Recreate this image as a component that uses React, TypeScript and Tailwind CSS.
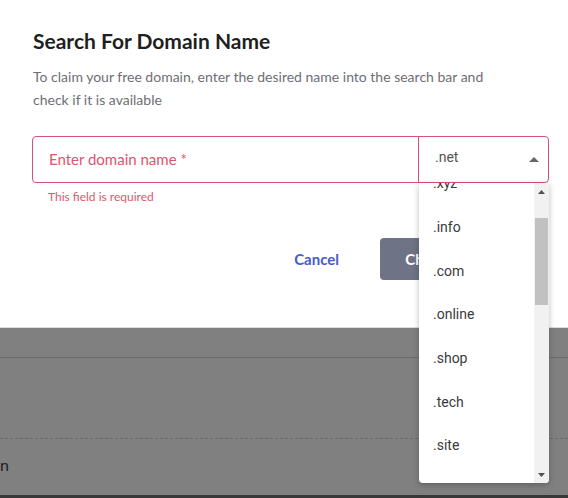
import { useState } from 'react';

const tlds = ['.xyz', '.info', '.com', '.online', '.shop', '.tech', '.site'];

function Scrollbar() {
  return (
    <div className="w-[15px] h-full bg-[#f1f1f1] flex flex-col items-center">
      <div className="h-[17px] w-full flex items-center justify-center">
        <svg width="7" height="4" viewBox="0 0 7 4">
          <path d="M0 4 L3.5 0 L7 4 Z" fill="#505050" />
        </svg>
      </div>
      <div className="mt-[18px] h-[87px] w-[13px] bg-[#c1c1c1]" />
      <div className="flex-1" />
      <div className="h-[17px] w-full flex items-center justify-center">
        <svg width="7" height="4" viewBox="0 0 7 4">
          <path d="M0 0 L7 0 L3.5 4 Z" fill="#505050" />
        </svg>
      </div>
    </div>
  );
}

export default function App() {
  const [tld] = useState('.net');

  return (
    <div className="h-[498px] w-full flex flex-col overflow-hidden font-['Lato',sans-serif]">
      {/* Modal */}
      <div className="h-[328px] bg-white pl-8 pr-[19px] pt-[28px] border-b border-[#dcdcdc]">
        <h2 className="text-[21px] leading-[26px] font-bold text-[#1f1f22] pl-px">Search For Domain Name</h2>
        <p className="mt-[11px] max-w-[462px] text-[14px] leading-[23px] text-[#6e6e76] pl-px">
          To claim your free domain, enter the desired name into the search bar and check if it is available
        </p>

        <div className="mt-[25px] flex h-[47px] rounded border border-[#d6517d]">
          <div className="flex-1 flex items-center pl-4">
            <span className="text-[15px] text-[#e0546f]">Enter domain name *</span>
          </div>
          <div className="relative w-[130px] border-l border-[#d6517d]">
            <div className="flex h-full items-center justify-between pl-4 pr-[9px] pb-[5px] font-['Roboto',sans-serif] text-[14px] text-[#555]">
              <span>{tld}</span>
              <svg width="10" height="5" viewBox="0 0 10 5" className="mt-1">
                <path d="M0 5 L5 0 L10 5 Z" fill="#666" />
              </svg>
            </div>
            {/* Dropdown */}
            <div className="absolute left-0 top-[46px] z-10 flex h-[300px] w-[130px] overflow-hidden rounded-b bg-white shadow-[0_2px_6px_rgba(0,0,0,0.25)]">
              <div className="flex-1 overflow-hidden">
                <div className="-mt-[21px]">
                  {tlds.map((t) => (
                    <div
                      key={t}
                      className="flex h-[43.7px] items-center pl-[14px] font-['Roboto',sans-serif] text-[14px] text-[#3a3a3a]"
                    >
                      {t}
                    </div>
                  ))}
                </div>
              </div>
              <Scrollbar />
            </div>
          </div>
        </div>
        <p className="mt-[6px] pl-4 text-[12px] leading-4 text-[#de5770]">This field is required</p>

        <div className="mt-[33px] flex justify-end items-center">
          <button className="px-4 text-[15px] font-bold text-[#4a5bcc]">Cancel</button>
          <button className="ml-[25px] h-[42px] w-[169px] rounded bg-[#6e7386] text-[15px] font-bold text-white">
            Check Availability
          </button>
        </div>
      </div>

      {/* Page behind the overlay */}
      <div className="flex-1 flex flex-col bg-[#808080]">
        <div className="h-[29px]" />
        <div className="border-t border-[#6c6c6c]" />
        <div className="h-[80px]" />
        <div className="border-t border-dashed border-[#6a6a6a]" />
        <div className="flex-1 pt-[14px]">
          <span className="text-[16px] text-[#222]">n</span>
        </div>
        <div className="h-[3px] bg-[#383838]" />
      </div>
    </div>
  );
}
